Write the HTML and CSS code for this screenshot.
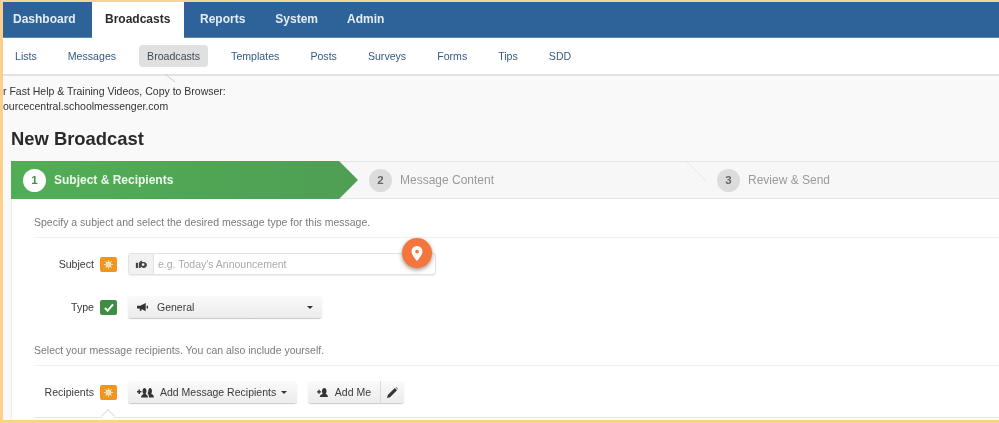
FILE: index.html
```html
<!DOCTYPE html>
<html lang="en">
<head>
<meta charset="utf-8">
<title>New Broadcast</title>
<link rel="stylesheet" href="styles.css">
</head>
<body>
<div class="frame">
  <nav class="topnav">
    <a class="tab">Dashboard</a>
    <a class="tab active">Broadcasts</a>
    <a class="tab">Reports</a>
    <a class="tab">System</a>
    <a class="tab">Admin</a>
  </nav>
  <nav class="subnav">
    <a class="sub">Lists</a>
    <a class="sub">Messages</a>
    <a class="sub current">Broadcasts</a>
    <a class="sub">Templates</a>
    <a class="sub">Posts</a>
    <a class="sub">Surveys</a>
    <a class="sub">Forms</a>
    <a class="sub">Tips</a>
    <a class="sub">SDD</a>
    <svg class="subnotch" width="14" height="10" viewBox="0 0 14 10"><path d="M0 0L10 8" stroke="#ccc" fill="none"/></svg>
  </nav>
  <main class="page">
    <p class="notice">r Fast Help &amp; Training Videos, Copy to Browser:<br>ourcecentral.schoolmessenger.com</p>
    <h1 class="title">New Broadcast</h1>
    <section class="card">
      <div class="wizard">
        <div class="step step-on"><span class="num">1</span><span>Subject &amp; Recipients</span></div>
        <div class="step step-two"><span class="num">2</span><span>Message Content</span></div>
        <svg class="divider" width="20" height="24" viewBox="0 0 20 24"><path d="M0 0L19 19" stroke="#e6e6e6" fill="none"/></svg>
        <div class="step step-three"><span class="num">3</span><span>Review &amp; Send</span></div>
      </div>
      <div class="body">
        <p class="hint">Specify a subject and select the desired message type for this message.</p>
        <div class="row row-subject">
          <label class="lbl">Subject</label>
          <span class="flag flag-o"><svg width="11" height="11" viewBox="0 0 12 12"><circle cx="6" cy="6" r="3" fill="#fff3d6"/><path d="M6 1v10M1 6h10M2.500 2.500l7 7M9.500 2.500l-7 7" stroke="#fbdca6" stroke-width="1.100"/></svg></span>
          <div class="inputbox">
            <span class="addon"><svg width="12" height="11" viewBox="0 0 14 12"><path fill-rule="evenodd" d="M1 4h2.500v6H1zM4.500 4L7 1.500h1.500l-.5 1.500h2.500a3.500 3.500 0 1 1-3 5.500L6 10H4.500zM9.500 4.500a1.600 1.600 0 1 0 0 3.200 1.600 1.600 0 0 0 0-3.200z" fill="#444"/></svg></span>
            <span class="placeholder">e.g. Today's Announcement</span>
          </div>
          <span class="pin"><svg width="12" height="15" viewBox="0 0 12 15"><path fill-rule="evenodd" d="M6 0a5.500 5.500 0 0 1 5.500 5.500C11.500 9 6 15 6 15S.5 9 .5 5.500A5.500 5.500 0 0 1 6 0zm0 3.700a1.900 1.900 0 1 0 0 3.800 1.900 1.900 0 0 0 0-3.800z" fill="#fff"/></svg></span>
        </div>
        <div class="row row-type">
          <label class="lbl">Type</label>
          <span class="flag flag-g"><svg width="10" height="9" viewBox="0 0 11 10"><path d="M1 5.500l3 3 6-7" stroke="#fff" stroke-width="2.200" fill="none"/></svg></span>
          <button class="btn btn-select">
            <svg width="11" height="10" viewBox="0 0 12 10"><path d="M0 3.500h3.500L9.500 .5v9L5 7.300V9H3V6.500H0zM10.500 3.500h1.500v3h-1.500z" fill="#333"/></svg>
            <span class="btn-text">General</span>
            <span class="caret"></span>
          </button>
        </div>
        <p class="hint hint-two">Select your message recipients. You can also include yourself.</p>
        <div class="row row-rec">
          <label class="lbl">Recipients</label>
          <span class="flag flag-o"><svg width="11" height="11" viewBox="0 0 12 12"><circle cx="6" cy="6" r="3" fill="#fff3d6"/><path d="M6 1v10M1 6h10M2.500 2.500l7 7M9.500 2.500l-7 7" stroke="#fbdca6" stroke-width="1.100"/></svg></span>
          <button class="btn btn-add">
            <svg width="17" height="11" viewBox="0 0 17 11"><path d="M0 4h1.500V2.500H3V4h1.500v1.500H3V7H1.500V5.500H0zM4 10.500c0-2 1.500-3 2.500-3.500-.8-1-1-2-1-3 0-1.500.8-3 2-3s2 1.500 2 3c0 1-.3 2-1 3 1 .5 2.500 1.500 2.500 3.500zM12 10.500c0-1.500-.5-3-1.500-4 .5-.8.800-1.500.800-2.500 0-1.500.700-3 1.800-3S15 2.500 15 4c0 1-.3 2-.8 2.800.8.400 2.800 1.200 2.800 3.700z" fill="#333"/></svg>
            <span class="btn-text">Add Message Recipients</span>
            <span class="caret"></span>
          </button>
          <div class="btn-group">
            <button class="btn btn-me">
              <svg width="13" height="11" viewBox="0 0 13 11"><path d="M0 4h1.500V2.500H3V4h1.500v1.500H3V7H1.500V5.500H0zM3 10.500c0-2 2-2.800 3.500-3.500-.8-1-1-2-1-3.200C5.500 2 6.500.5 8 .5s2.500 1.500 2.500 3.300c0 1.200-.3 2.200-1 3.200 1.500.7 2.500 1.500 2.500 3.500z" fill="#333"/></svg>
              <span class="btn-text">Add Me</span>
            </button>
            <button class="btn btn-edit"><svg width="11" height="11" viewBox="0 0 11 11"><path d="M0 11l.8-3L7.800 1l2.200 2.200-7 7zM8.500.3l.5-.3 2 2-.3.500z" fill="#333"/></svg></button>
          </div>
        </div>
        <div class="rec-panel"><span class="rec-notch"></span></div>
      </div>
    </section>
  </main>
</div>
</body>
</html>
```
FILE: styles.css
```css
* { box-sizing: border-box; }
html, body { margin: 0; padding: 0; }
body { width: 999px; height: 423px; overflow: hidden; font-family: "Liberation Sans", Arial, sans-serif; background: #fdcf8c; }
.frame {
  width: 999px; height: 423px; overflow: hidden; position: relative;
  border-top: 2px solid #f5d596; border-left: 3px solid #fdcf8c; border-bottom: 3px solid #fbd28a;
  background: #f9f9f9; display: flex; flex-direction: column;
  filter: blur(.3px);
}
.topnav { height: 36px; background: #2d6398; display: flex; flex: none; border-bottom: 1px solid #5b86ad; }
.tab { display: block; color: #e4edf5; font-size: 12px; font-weight: bold; line-height: 35px; white-space: nowrap; }
.tab:nth-child(1) { width: 89px; padding-left: 10px; }
.tab:nth-child(2) { width: 92px; padding-left: 13px; background: #fff; color: #2b2b2b; height: 36px; }
.tab:nth-child(3) { margin-left: 16px; }
.tab:nth-child(4) { margin-left: 30px; }
.tab:nth-child(5) { margin-left: 29px; }
.subnav { height: 38px; flex: none; background: #fff; border-bottom: 2px solid #e2e2e2; display: flex; align-items: center; position: relative; padding-left: 12px; }
.sub { font-size: 10.6px; color: #345a80; line-height: 22px; }
.sub:nth-child(2) { margin-left: 31px; }
.sub:nth-child(3) { margin-left: 23px; background: #e0e0e0; color: #404a55; border-radius: 4px; padding: 0 8px; }
.sub:nth-child(4) { margin-left: 23px; }
.sub:nth-child(n+5) { margin-left: 31px; }
.subnotch { position: absolute; left: 162px; top: 36px; }
.page { flex: 1; min-height: 0; }
.notice { margin: 8px 0 0; font-size: 10.5px; line-height: 15px; color: #333; }
.title { margin: 13px 0 0 8px; font-size: 18.4px; line-height: 24px; font-weight: bold; color: #2a2a2a; }
.card { margin: 10px 0 0 8px; background: #fff; border-left: 1px solid #eee; }
.wizard { height: 38px; display: flex; align-items: center; background: #f7f7f7; border-top: 1px solid #e4e4e4; border-bottom: 1px solid #e4e4e4; position: relative; margin-left: -1px; }
.step { display: flex; align-items: center; font-size: 12px; color: #9a9a9a; }
.num { width: 23px; height: 23px; border-radius: 50%; background: #dcdcdc; color: #666; font-weight: bold; font-size: 11.5px; display: flex; align-items: center; justify-content: center; margin-right: 8px; }
.step-on {
  width: 347px; height: 38px; margin-top: -1px; margin-bottom: -1px; padding-left: 12px; flex: none;
  background: linear-gradient(90deg, #52ae56, #4f9e54); color: #eef7ee; font-weight: bold;
  clip-path: polygon(0 0, 328px 0, 100% 50%, 328px 100%, 0 100%);
}
.step-on .num { background: #fff; color: #4a8c4e; }
.step-two { margin-left: 11px; width: 336px; flex: none; }
.step-three { margin-left: 12px; }
.divider { position: absolute; left: 676px; top: 0; }
.body { padding: 0 0 0 22px; }
.hint { margin: 0; font-size: 10.5px; line-height: 14px; color: #7a7a7a; }
.body > .hint:first-child { padding: 16px 0 8px; border-bottom: 1px solid #f1f1f1; }
.hint-two { padding-bottom: 8px; border-bottom: 1px solid #f1f1f1; margin-top: 24px; }
.row { display: flex; align-items: center; position: relative; height: 24px; }
.row-subject { margin-top: 14px; }
.row-type { margin-top: 19px; }
.row-rec { margin-top: 14px; }
.lbl { width: 60px; text-align: right; font-size: 10.6px; color: #3a3a3a; margin-right: 6px; white-space: nowrap; }
.flag { width: 17px; height: 15px; border-radius: 2px; display: flex; align-items: center; justify-content: center; flex: none; margin-right: 11px; }
.flag-o { background: #f2951f; }
.flag-g { background: #3f8c46; }
.inputbox { width: 308px; height: 22px; border: 1px solid #e2e2e2; border-radius: 3px; display: flex; align-items: center; background: #fff; box-shadow: 0 1px 1px #eee; }
.addon { width: 25px; height: 20px; background: #f1f1f1; border-right: 1px solid #e2e2e2; display: flex; align-items: center; justify-content: center; flex: none; }
.placeholder { font-size: 10.5px; color: #aaa; margin-left: 4px; }
.pin { position: absolute; left: 368px; top: -14px; width: 30px; height: 30px; border-radius: 50%; background: #f5763c; display: flex; align-items: center; justify-content: center; box-shadow: 0 2px 4px rgba(90,60,40,.55); }
.btn { height: 22px; border: 0; border-radius: 3px; background: linear-gradient(#fafafa, #ececec); box-shadow: 0 1px 1px #c8c8c8; display: flex; align-items: center; padding: 0 9px; font: 10.5px "Liberation Sans", Arial, sans-serif; color: #3a3a3a; flex: none; white-space: nowrap; }
.btn-text { margin-left: 6px; }
.caret { width: 0; height: 0; border-left: 3px solid transparent; border-right: 3px solid transparent; border-top: 3px solid #333; margin-left: auto; }
.btn-select { width: 194px; }
.btn-select .btn-text { margin-left: 9px; }
.btn-add { width: 169px; padding-right: 10px; }
.btn-group { display: flex; margin-left: 11px; }
.btn-me { width: 73px; border-radius: 3px 0 0 3px; border-right: 1px solid #ddd; }
.btn-edit { width: 23px; border-radius: 0 3px 3px 0; padding: 0 6px; }
.rec-panel { height: 10px; margin-top: 13px; border-top: 1px solid #e6e6e6; position: relative; }
.rec-notch { position: absolute; left: 69px; top: -7px; width: 10px; height: 10px; background: #fff; border-top: 1px solid #ddd; border-left: 1px solid #ddd; transform: rotate(45deg); }
```
